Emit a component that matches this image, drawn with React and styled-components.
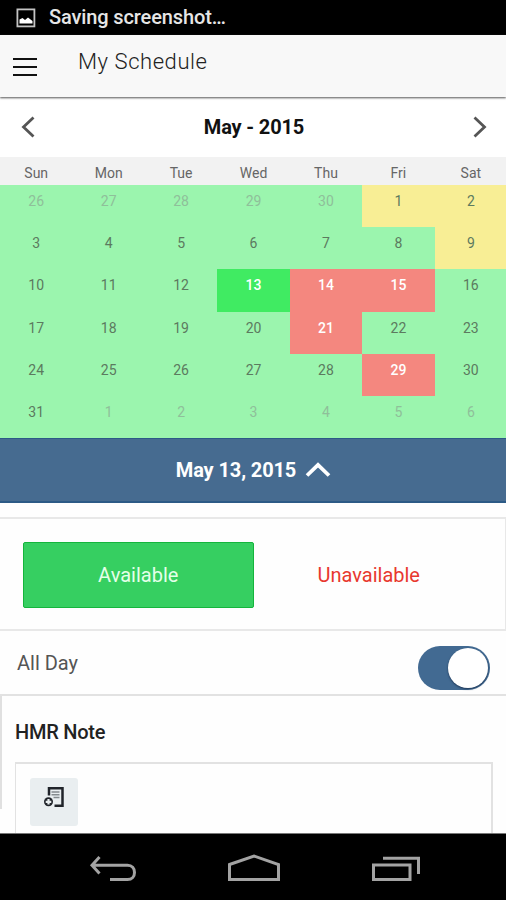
import React, { useState } from "react";
import styled, { createGlobalStyle } from "styled-components";

const WEEKDAYS = ["Sun", "Mon", "Tue", "Wed", "Thu", "Fri", "Sat"];

const DAYS = [
   ...[26, 27, 28, 29, 30].map((day) => ({ day, muted: true })),
   ...Array.from({ length: 31 }, (_, i) => ({ day: i + 1 })),
   ...[1, 2, 3, 4, 5, 6].map((day) => ({ day, muted: true })),
];

const STATUS = {
   1: "partial",
   2: "partial",
   9: "partial",
   14: "busy",
   15: "busy",
   21: "busy",
   29: "busy",
};

const dayColors = {
   free: "#9bf5ae",
   partial: "#f8ee95",
   busy: "#f4877f",
   selected: "#40eb62",
};

const getStatus = ({ day, muted }, selected) => {
   if (muted) return "free";
   if (day === selected) return "selected";
   return STATUS[day] || "free";
};

const App = () => {
   const [selected, setSelected] = useState(13);
   const [available, setAvailable] = useState(true);
   const [allDay, setAllDay] = useState(true);

   return (
      <Screen>
         <GlobalStyle />
         <StatusBar>
            <svg width="20" height="20" viewBox="0 0 20 20">
               <rect x="1.4" y="1.4" width="17" height="17" fill="none" stroke="#c4c4c4" strokeWidth="1.8" />
               <path d="M3.5 15.5v-4l3-1.5 2.5 2 3-2.5 4.5 3.5v2.5z" fill="#fff" />
            </svg>
            <StatusText>Saving screenshot…</StatusText>
         </StatusBar>

         <Header>
            <MenuButton aria-label="Menu">
               <span />
               <span />
               <span />
            </MenuButton>
            <Title>My Schedule</Title>
         </Header>

         <MonthBar>
            <ArrowButton aria-label="Previous month">
               <svg width="14" height="22" viewBox="0 0 14 22">
                  <path d="M12.5 1.5L2.5 11l10 9.5" />
               </svg>
            </ArrowButton>
            <MonthName>May - 2015</MonthName>
            <ArrowButton aria-label="Next month">
               <svg width="14" height="22" viewBox="0 0 14 22">
                  <path d="M1.5 1.5L11.5 11l-10 9.5" />
               </svg>
            </ArrowButton>
         </MonthBar>

         <Weekdays>
            {WEEKDAYS.map((name) => (
               <Weekday key={name}>{name}</Weekday>
            ))}
         </Weekdays>
         <Calendar>
            {DAYS.map((item, i) => (
               <Day
                  key={i}
                  $status={getStatus(item, selected)}
                  $muted={item.muted}
                  onClick={() => !item.muted && setSelected(item.day)}
               >
                  {item.day}
               </Day>
            ))}
         </Calendar>

         <DateBar>
            <DateText>May {selected}, 2015</DateText>
            <svg width="26" height="17" viewBox="0 0 26 17">
               <path d="M2 13.5L13 3l11 10.5" fill="none" stroke="#fff" strokeWidth="3.8" />
            </svg>
         </DateBar>

         <Choices>
            <Choice $color="#36cf61" $active={available} onClick={() => setAvailable(true)}>
               Available
            </Choice>
            <Choice $color="#e8382e" $active={!available} onClick={() => setAvailable(false)}>
               Unavailable
            </Choice>
         </Choices>

         <AllDayRow>
            <AllDayLabel>All Day</AllDayLabel>
            <Toggle
               role="switch"
               aria-checked={allDay}
               $on={allDay}
               onClick={() => setAllDay((prev) => !prev)}
            >
               <Knob />
            </Toggle>
         </AllDayRow>

         <Notes>
            <NotesEdge />
            <NotesBody>
               <NotesTitle>HMR Note</NotesTitle>
               <NoteBox>
                  <AddNote aria-label="Add note">
                     <svg width="22" height="22" viewBox="0 0 22 22" fill="none">
                        <path d="M6 9.5V2.3h13.5v17.4h-8" stroke="#20242a" strokeWidth="2.5" />
                        <path d="M8.5 6h8M8.5 8.8h8M10.5 11.6h6" stroke="#858b8f" strokeWidth="1.5" />
                        <circle cx="5.5" cy="15.8" r="4.5" fill="#20242a" />
                        <path d="M5.5 13v5.6M2.7 15.8h5.6" stroke="#e9eef0" strokeWidth="2.2" />
                     </svg>
                  </AddNote>
               </NoteBox>
            </NotesBody>
         </Notes>

         <NavBar>
            <NavButton aria-label="Back">
               <svg width="48" height="30" viewBox="0 0 48 30">
                  <path d="M11.5 3L4 11.2l7.5 8.3M4 11.2h35.500c4.500 0 7 3.200 7 7.200s-2.500 7.200-7 7.200H22" />
               </svg>
            </NavButton>
            <NavButton aria-label="Home">
               <svg width="54" height="30" viewBox="0 0 54 30">
                  <path d="M2.5 10.500L27 2l24.500 8.500v15h-49z" />
               </svg>
            </NavButton>
            <NavButton aria-label="Recent apps">
               <svg width="50" height="30" viewBox="0 0 50 30">
                  <path d="M1.5 11H38v14.500H1.500zM11 4.200h35.500V20" />
               </svg>
            </NavButton>
         </NavBar>
      </Screen>
   );
};

const GlobalStyle = createGlobalStyle`
   * {
      box-sizing: border-box;
   }

   body {
      margin: 0;
      background: #fff;
      font-family: Roboto, sans-serif;
   }

   button {
      padding: 0;
      border: 0;
      background: none;
      font: inherit;
   }

   svg {
      display: block;
   }
`;

const Screen = styled.div`
   display: flex;
   flex-direction: column;
   width: 506px;
   height: 900px;
   overflow: hidden;
   background: #fefefe;
`;

const StatusBar = styled.div`
   display: flex;
   align-items: center;
   gap: 13px;
   height: 35px;
   padding-left: 16px;
   background: #000;
   color: #e6e6e6;
`;

const StatusText = styled.span`
   padding-bottom: 2px;
   font-size: 20px;
   font-weight: 500;
   line-height: 32px;
   letter-spacing: -0.12px;
`;

const Header = styled.header`
   display: flex;
   height: 62px;
   padding-left: 13px;
   background: #f8f8f8;
   box-shadow: 0 1px 2px #555;
   z-index: 1;
`;

const MenuButton = styled.button`
   display: flex;
   flex-direction: column;
   gap: 6px;
   width: 24px;
   height: 18px;
   margin-top: 23px;

   span {
      height: 2px;
      width: 100%;
      background: #111;
   }
`;

const Title = styled.h1`
   margin: 14px 0 0 41px;
   color: #222;
   font-size: 22px;
   font-weight: 300;
   line-height: 26px;
   letter-spacing: 0.56px;
`;

const MonthBar = styled.div`
   display: flex;
   align-items: center;
   justify-content: space-between;
   height: 60px;
   padding: 0 19px 0 21px;
   background: #fff;
`;

const ArrowButton = styled.button`
   path {
      fill: none;
      stroke: #555;
      stroke-width: 2.8;
   }
`;

const MonthName = styled.h2`
   margin: 0;
   color: #111;
   font-size: 20px;
   font-weight: 700;
   letter-spacing: -0.15px;
`;

const Weekdays = styled.div`
   display: grid;
   grid-template-columns: repeat(7, 72.45px);
   height: 28px;
   background: #f2f2f2;
`;

const Weekday = styled.span`
   color: #666;
   font-size: 14px;
   line-height: 32px;
   text-align: center;
`;

const Calendar = styled.div`
   display: grid;
   grid-template-columns: repeat(7, 72.45px);
   grid-template-rows: repeat(6, 1fr);
   height: 253px;
   background: ${dayColors.free};
`;

const Day = styled.button`
   display: flex;
   justify-content: center;
   padding-top: 8px;
   background: ${({ $status }) => dayColors[$status]};
   color: ${({ $status, $muted }) =>
      $muted ? "#8fbf9a" : $status === "busy" || $status === "selected" ? "#fff" : "#5c7a5f"};
   font-size: 14px;
   font-weight: ${({ $status }) => ($status === "busy" || $status === "selected" ? 500 : 400)};
   line-height: 16px;
`;

const DateBar = styled.div`
   display: flex;
   align-items: center;
   justify-content: center;
   gap: 9px;
   height: 65px;
   padding-left: 1px;
   border: solid #2c5a86;
   border-width: 1px 0 2px;
   background: #466b90;
   color: #fff;
`;

const DateText = styled.span`
   font-size: 20px;
   font-weight: 700;
   letter-spacing: -0.12px;
`;

const Choices = styled.div`
   display: flex;
   height: 114px;
   margin-top: 14px;
   padding: 23px 21px 0 23px;
   border: solid #e8e8e8;
   border-width: 2px 1px 2px 0;
`;

const Choice = styled.button`
   flex: 1;
   height: 66px;
   border: 1px solid ${({ $active }) => ($active ? "#14b53c" : "transparent")};
   border-radius: 2px;
   background: ${({ $active, $color }) => ($active ? $color : "transparent")};
   color: ${({ $active, $color }) => ($active ? "#e4ffe9" : $color)};
   font-size: 20px;
`;

const AllDayRow = styled.div`
   display: flex;
   justify-content: space-between;
   height: 65px;
   padding: 15px 16px 0 17px;
   border-bottom: 2px solid #e2e2e2;
`;

const AllDayLabel = styled.span`
   color: #555;
   font-size: 20px;
   line-height: 35px;
`;

const Toggle = styled.button`
   display: flex;
   justify-content: ${({ $on }) => ($on ? "flex-end" : "flex-start")};
   width: 72px;
   height: 44px;
   padding: 2px;
   border-radius: 22px;
   background: ${({ $on }) => ($on ? "#426a92" : "#ccc")};
`;

const Knob = styled.span`
   width: 40px;
   height: 40px;
   border-radius: 50%;
   background: #fff;
   box-shadow: 0 1px 2px #1c3555;
`;

const Notes = styled.section`
   display: flex;
   flex: 1;
   min-height: 0;
`;

const NotesEdge = styled.div`
   width: 2px;
   height: 113px;
   background: #e0e0e0;
`;

const NotesBody = styled.div`
   display: flex;
   flex-direction: column;
   flex: 1;
   padding: 23px 13px 0 13px;
`;

const NotesTitle = styled.h3`
   margin: 0;
   color: #222;
   font-size: 20px;
   font-weight: 500;
   line-height: 26px;
   letter-spacing: -0.25px;
`;

const NoteBox = styled.div`
   flex: 1;
   margin-top: 17px;
   padding: 14px;
   border: solid #e2e2e2;
   border-width: 2px 2px 0 1px;
`;

const AddNote = styled.button`
   display: flex;
   justify-content: center;
   width: 48px;
   height: 48px;
   padding-top: 8px;
   border-radius: 3px;
   background: #e9eef0;
`;

const NavBar = styled.nav`
   display: flex;
   justify-content: space-between;
   height: 67px;
   padding: 20px 84px 0 88px;
   border-top: 1px solid #777;
   background: #000;
`;

const NavButton = styled.button`
   height: 30px;

   path {
      fill: none;
      stroke: #a3a3a3;
      stroke-width: 3;
   }
`;

export default App;
